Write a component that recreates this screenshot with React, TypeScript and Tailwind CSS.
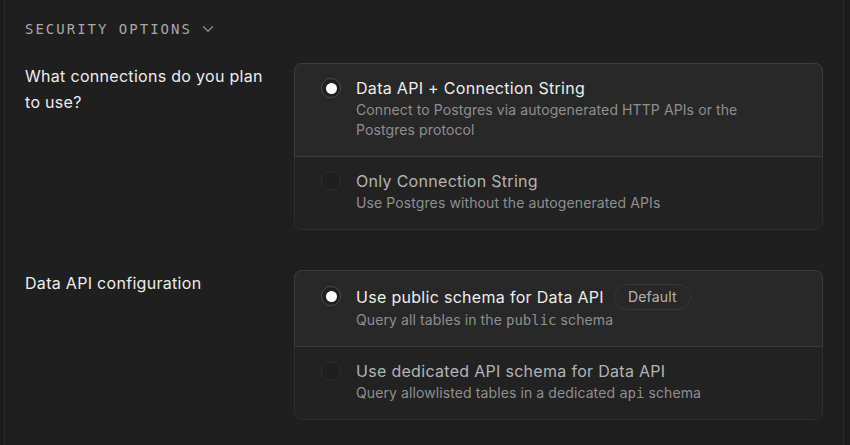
import React from "react";

const sans = { fontFamily: "Inter, 'Noto Sans', sans-serif" };
const mono = { fontFamily: "'DejaVu Sans Mono', 'Liberation Mono', monospace" };

function Radio({ checked }: { checked: boolean }) {
  return (
    <div
      className={
        "flex h-5 w-5 shrink-0 items-center justify-center rounded-full border " +
        (checked ? "border-[#4a4a4a] bg-[#1f1f1f]" : "border-[#2e2e2e] bg-[#1f1f1f]")
      }
    >
      {checked && <div className="h-[11px] w-[11px] rounded-full bg-white" />}
    </div>
  );
}

function Option({
  checked,
  title,
  desc,
  badge,
  last,
}: {
  checked: boolean;
  title: string;
  desc: React.ReactNode;
  badge?: string;
  last?: boolean;
}) {
  return (
    <div
      className={
        "flex gap-[15px] pl-[26px] pr-8 pt-3 pb-4 " +
        (checked
          ? "bg-[#282828] border border-[#3c3c3c] -mx-px -mt-px rounded-t-lg"
          : "bg-[#222222]") +
        (last ? " rounded-b-lg" : "")
      }
    >
      <div className={badge ? "pt-[3px]" : "pt-[2px]"}>
        <Radio checked={checked} />
      </div>
      <div className="flex flex-col">
        <div className={"flex items-center gap-[10px] " + (badge ? "h-[27px]" : "")}>
          <span
            className={
              "text-[16px] leading-6 tracking-[0.3px] " +
              (checked ? "text-[#ededed]" : "text-[#b4b4b4]")
            }
          >
            {title}
          </span>
          {badge && (
            <span className="flex h-[26px] items-center rounded-full border border-[#363636] px-[13px] text-[14px] tracking-[0.2px] text-[#b4b4b4]">
              {badge}
            </span>
          )}
        </div>
        <div className="text-[14px] leading-5 tracking-[0.1px] text-[#8f8f8f]">{desc}</div>
      </div>
    </div>
  );
}

export default function App() {
  return (
    <div className="h-[445px] w-[850px] overflow-hidden bg-[#1c1c1c]" style={sans}>
      <div className="ml-[4px] h-full w-[840px] border-x border-[#2a2a2a] bg-[#1f1f1f] pl-5 pr-5 pt-[19px]">
        <div className="flex h-5 items-center gap-[7px]">
          <span
            className="text-[14px] leading-5 uppercase tracking-[2px] text-[#a8a8a8]"
            style={mono}
          >
            Security options
          </span>
          <svg width="18" height="18" viewBox="0 0 24 24" fill="none" stroke="#8f8f8f" strokeWidth="1.6" strokeLinecap="round" strokeLinejoin="round">
            <path d="m6 9 6 6 6-6" />
          </svg>
        </div>

        <div className="mt-[24px] flex">
          <div className="w-[269px] pr-5 text-[16px] leading-[26px] tracking-[0.3px] text-[#ededed]">
            What connections do you plan to use?
          </div>
          <div className="flex-1 rounded-lg border border-[#2e2e2e] bg-[#222222]">
            <Option
              checked
              title="Data API + Connection String"
              desc="Connect to Postgres via autogenerated HTTP APIs or the Postgres protocol"
            />
            <Option
              checked={false}
              last
              title="Only Connection String"
              desc="Use Postgres without the autogenerated APIs"
            />
          </div>
        </div>

        <div className="mt-[40px] flex">
          <div className="w-[269px] pr-5 text-[16px] leading-[26px] tracking-[0.3px] text-[#ededed]">
            Data API configuration
          </div>
          <div className="flex-1 rounded-lg border border-[#2e2e2e] bg-[#222222]">
            <Option
              checked
              badge="Default"
              title="Use public schema for Data API"
              desc={
                <>
                  Query all tables in the{" "}
                  <span className="text-[14px] tracking-normal" style={mono}>
                    public
                  </span>{" "}
                  schema
                </>
              }
            />
            <Option
              checked={false}
              last
              title="Use dedicated API schema for Data API"
              desc={
                <>
                  Query allowlisted tables in a dedicated{" "}
                  <span className="text-[14px] tracking-normal" style={mono}>
                    api
                  </span>{" "}
                  schema
                </>
              }
            />
          </div>
        </div>
      </div>
    </div>
  );
}
